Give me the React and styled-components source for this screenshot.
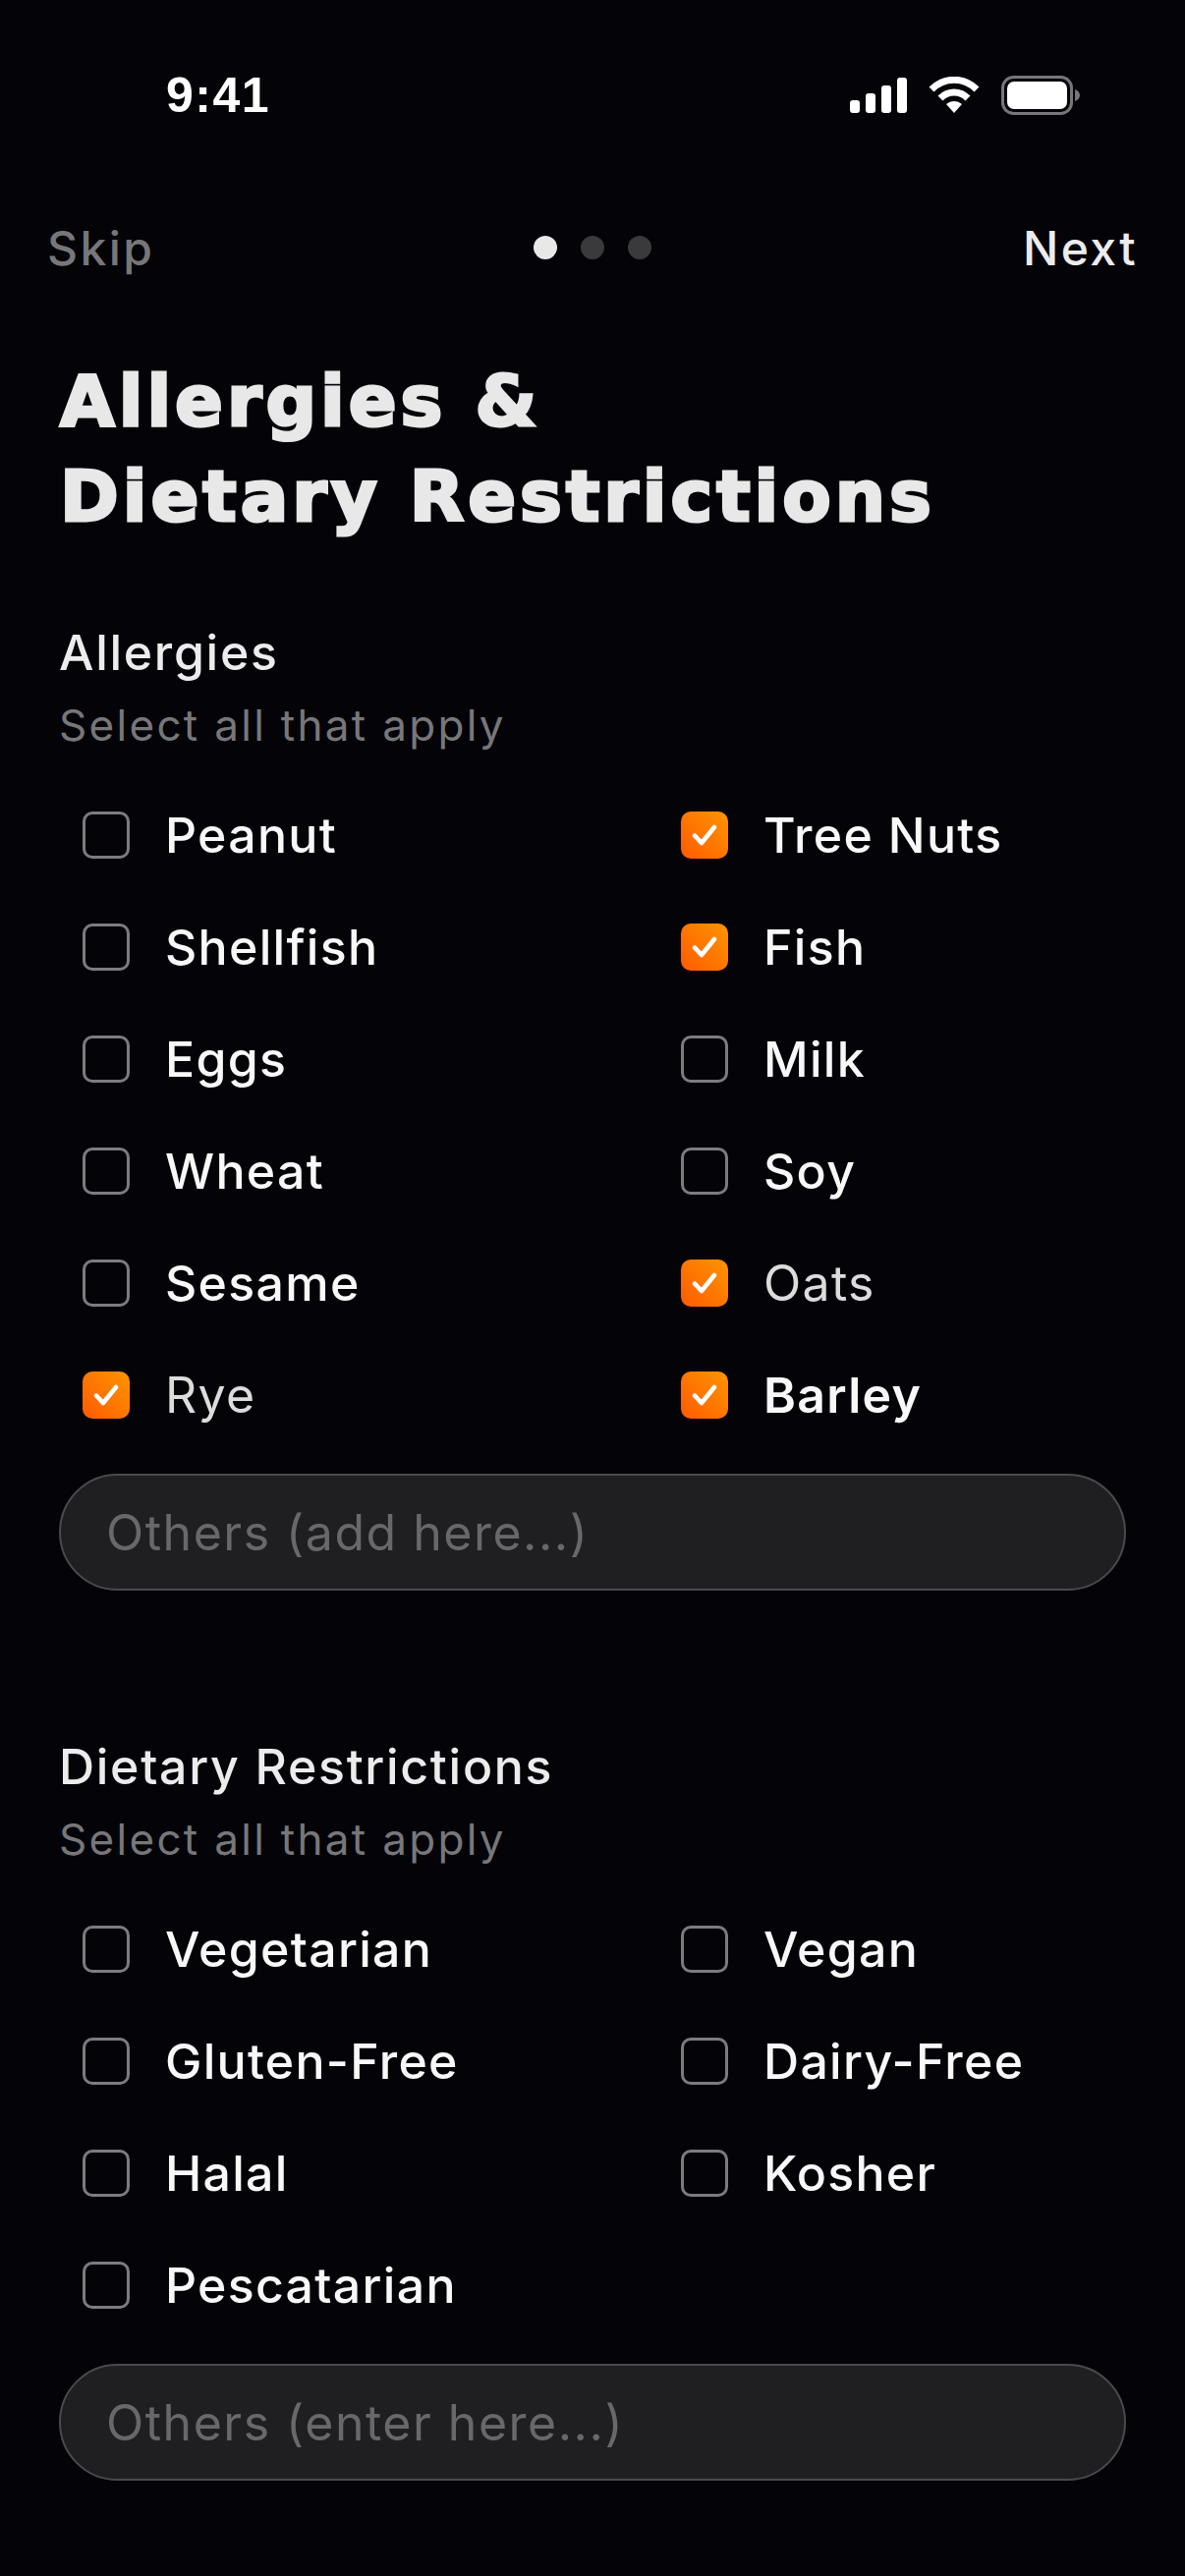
import React from "react";
import styled, { createGlobalStyle } from "styled-components";

const GlobalStyle = createGlobalStyle`
  html, body {
    margin: 0;
    padding: 0;
    background: #040308;
  }
  * {
    box-sizing: border-box;
  }
`;

const allergies = [
  { name: "Peanut" },
  { name: "Tree Nuts", checked: true },
  { name: "Shellfish" },
  { name: "Fish", checked: true },
  { name: "Eggs" },
  { name: "Milk" },
  { name: "Wheat" },
  { name: "Soy" },
  { name: "Sesame" },
  { name: "Oats", checked: true, weight: 400 },
  { name: "Rye", checked: true, weight: 400 },
  { name: "Barley", checked: true, weight: 600 },
];

const diets = [
  { name: "Vegetarian" },
  { name: "Vegan" },
  { name: "Gluten-Free" },
  { name: "Dairy-Free" },
  { name: "Halal" },
  { name: "Kosher" },
  { name: "Pescatarian" },
];

const SignalIcon = () => (
  <svg width="58" height="36" viewBox="0 0 58 36" fill="#fff">
    <rect x="0" y="23" width="10" height="13" rx="3" />
    <rect x="16" y="16" width="10" height="20" rx="3" />
    <rect x="32" y="8" width="10" height="28" rx="3" />
    <rect x="48" y="0" width="10" height="36" rx="3" />
  </svg>
);

const WifiIcon = () => (
  <svg width="52" height="38" viewBox="0 0 52 38" fill="none" stroke="#fff" strokeWidth="7">
    <path d="M3 13 C16 0 36 0 49 13" />
    <path d="M12 22 C20 14 32 14 40 22" />
    <path d="M26 37 L18 28 C23 24 29 24 34 28 Z" fill="#fff" stroke="none" />
  </svg>
);

const BatteryIcon = () => (
  <svg width="80" height="40" viewBox="0 0 80 40">
    <rect x="1.5" y="1.5" width="70" height="37" rx="11" fill="none" stroke="#77777a" strokeWidth="3" />
    <rect x="6" y="6" width="61" height="28" rx="7" fill="#fff" />
    <path d="M75 14 C78 15 80 17 80 20 C80 23 78 25 75 26 Z" fill="#77777a" />
  </svg>
);

const CheckIcon = () => (
  <svg width="28" height="24" viewBox="0 0 28 24" fill="none" stroke="#fff" strokeWidth="4.6" strokeLinecap="round" strokeLinejoin="round">
    <path d="M4 12.5 L11 20 L24 4" />
  </svg>
);

const Option = ({ name, checked, weight }) => (
  <OptionRow>
    <CheckBox $checked={checked}>{checked && <CheckIcon />}</CheckBox>
    <OptionLabel $weight={weight}>{name}</OptionLabel>
  </OptionRow>
);

const App = () => {
  return (
    <Page>
      <GlobalStyle />
      <StatusBar>
        <Clock>9:41</Clock>
        <StatusIcons>
          <SignalIcon />
          <WifiIcon />
          <BatteryIcon />
        </StatusIcons>
      </StatusBar>

      <Nav>
        <NavLink $muted>Skip</NavLink>
        <Dots>
          <Dot $active />
          <Dot />
          <Dot />
        </Dots>
        <NavLink $right>Next</NavLink>
      </Nav>

      <Title>
        Allergies &amp;
        <br />
        Dietary Restrictions
      </Title>

      <Section>
        <SectionTitle>Allergies</SectionTitle>
        <SectionHint>Select all that apply</SectionHint>
        <Options>
          {allergies.map((item) => (
            <Option key={item.name} {...item} />
          ))}
        </Options>
        <OtherInput placeholder="Others (add here...)" />
      </Section>

      <Section>
        <SectionTitle>Dietary Restrictions</SectionTitle>
        <SectionHint>Select all that apply</SectionHint>
        <Options>
          {diets.map((item) => (
            <Option key={item.name} {...item} />
          ))}
        </Options>
        <OtherInput placeholder="Others (enter here...)" />
      </Section>
    </Page>
  );
};

const Page = styled.div`
  width: 1206px;
  height: 2622px;
  overflow: hidden;
  background: #040308;
  color: #fff;
  font-family: "Inter", "Liberation Sans", sans-serif;
  padding-top: 60px;
`;

const StatusBar = styled.div`
  height: 74px;
  display: flex;
  align-items: center;
  justify-content: space-between;
  padding: 0 107px 0 169px;
`;

const Clock = styled.span`
  font-family: "Liberation Sans", sans-serif;
  font-size: 50px;
  font-weight: 700;
  letter-spacing: 1.5px;
`;

const StatusIcons = styled.div`
  display: flex;
  align-items: center;
  gap: 22px;
`;

const Nav = styled.div`
  margin-top: 88px;
  height: 60px;
  display: grid;
  grid-template-columns: 1fr auto 1fr;
  align-items: center;
  padding: 0 48px;
`;

const NavLink = styled.span`
  font-size: 48px;
  font-weight: 500;
  letter-spacing: 2.4px;
  color: ${(p) => (p.$muted ? "#77777a" : "#ececec")};
  text-align: ${(p) => (p.$right ? "right" : "left")};
`;

const Dots = styled.div`
  display: flex;
  gap: 24px;
`;

const Dot = styled.span`
  width: 24px;
  height: 24px;
  border-radius: 50%;
  background: ${(p) => (p.$active ? "#e8e8e8" : "#3a3a3c")};
`;

const Title = styled.h1`
  margin: 78px 0 0;
  padding-left: 61px;
  font-family: "DejaVu Sans", "Liberation Sans", sans-serif;
  font-size: 72px;
  font-weight: 700;
  line-height: 97px;
  letter-spacing: 4px;
  color: #e8e8e8;
  -webkit-text-stroke: 3px #e8e8e8;
`;

const Section = styled.section`
  margin-top: 80px;
  padding: 0 60px;
  & + & {
    margin-top: 149px;
  }
`;

const SectionTitle = styled.h2`
  margin: 0;
  height: 60px;
  font-size: 50px;
  font-weight: 500;
  letter-spacing: 1.7px;
  line-height: 60px;
  color: #ececec;
`;

const SectionHint = styled.p`
  margin: 14px 0 0;
  height: 60px;
  font-size: 44px;
  font-weight: 400;
  letter-spacing: 2.3px;
  line-height: 60px;
  color: #77777a;
`;

const Options = styled.div`
  margin-top: 25px;
  padding-left: 24px;
  display: grid;
  grid-template-columns: 609px 1fr;
  grid-auto-rows: 114px;
`;

const OptionRow = styled.div`
  display: flex;
  align-items: center;
  gap: 36px;
`;

const CheckBox = styled.span`
  width: 48px;
  height: 48px;
  flex: none;
  display: flex;
  align-items: center;
  justify-content: center;
  border-radius: 10px;
  border: ${(p) => (p.$checked ? "none" : "3px solid #7c7c7f")};
  background: ${(p) => (p.$checked ? "linear-gradient(45deg, #ff5a00, #ff9500)" : "transparent")};
`;

const OptionLabel = styled.span`
  font-size: 50px;
  font-weight: ${(p) => p.$weight || 500};
  letter-spacing: 1.3px;
  color: ${(p) => (p.$weight === 400 ? "#dcdcdc" : "#f8f8f8")};
`;

const OtherInput = styled.input`
  display: block;
  width: 100%;
  height: 119px;
  margin-top: 23px;
  padding: 0 46px;
  border: 2px solid #4a4a4d;
  border-radius: 60px;
  outline: none;
  background: #1f1f22;
  color: #fff;
  font-family: inherit;
  font-size: 50px;
  letter-spacing: 1.5px;
  &::placeholder {
    color: #68686b;
    opacity: 1;
  }
`;

export default App;
